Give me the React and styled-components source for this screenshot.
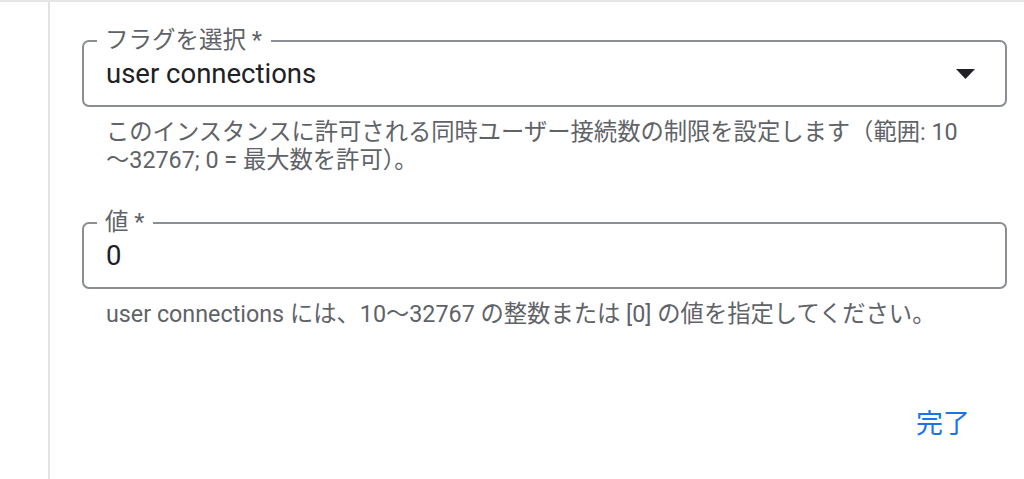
import * as React from "react";
import styled, { createGlobalStyle } from "styled-components";

const GlobalStyle = createGlobalStyle`
  html, body {
    margin: 0;
    padding: 0;
    background: #ffffff;
  }
  body {
    font-family: Roboto, "Noto Sans CJK JP", sans-serif;
  }
`;

const Page = styled.div`
  display: flex;
  height: 479px;
  box-sizing: border-box;
  border-top: 2px solid #e6e6e8;
  overflow: hidden;
`;

const Gutter = styled.div`
  width: 48px;
  flex-shrink: 0;
  border-right: 2px solid #e3e3e5;
`;

const Panel = styled.section`
  flex: 1;
  display: flex;
  flex-direction: column;
  padding: 38px 17px 0 32px;
`;

const Field = styled.div`
  position: relative;
  display: flex;
  align-items: center;
  height: 67px;
  box-sizing: border-box;
  margin-top: ${(p) => p.$gap || 0}px;
  padding: 0 30px 0 22px;
  border: 2px solid #8a8e92;
  border-radius: 7px;
`;

const FloatLabel = styled.span`
  position: absolute;
  top: -15px;
  left: 13px;
  padding: 0 9px 0 8px;
  background: #ffffff;
  font-size: 23.5px;
  line-height: 26px;
  color: #5f6368;
`;

const Value = styled.span`
  flex: 1;
  font-size: 27.5px;
  color: #202124;
`;

const Caret = styled.svg`
  width: 19px;
  height: 10px;
  flex-shrink: 0;
`;

const Helper = styled.p`
  margin: 11px 0 0 24px;
  font-size: 23.3px;
  line-height: 28px;
  color: #5f6368;
`;

const Actions = styled.div`
  display: flex;
  justify-content: flex-end;
  margin-top: 70px;
  padding-right: 21px;
`;

const TextButton = styled.button`
  border: none;
  background: none;
  padding: 4px 16px;
  font-family: inherit;
  font-size: 27px;
  color: #1a73e8;
  cursor: pointer;
`;

const App = () => {
  return (
    <>
      <GlobalStyle />
      <Page>
        <Gutter />
        <Panel>
          <Field>
            <FloatLabel>フラグを選択 *</FloatLabel>
            <Value>user connections</Value>
            <Caret viewBox="0 0 19 10">
              <path d="M0 0 L19 0 L9.5 10 Z" fill="#202124" />
            </Caret>
          </Field>
          <Helper>
            このインスタンスに許可される同時ユーザー接続数の制限を設定します（範囲: 10
            <br />
            〜32767; 0 = 最大数を許可）。
          </Helper>
          <Field $gap={48}>
            <FloatLabel>値 *</FloatLabel>
            <Value>0</Value>
          </Field>
          <Helper>
            user connections には、10〜32767 の整数または [0] の値を指定してください。
          </Helper>
          <Actions>
            <TextButton>完了</TextButton>
          </Actions>
        </Panel>
      </Page>
    </>
  );
};

export default App;
